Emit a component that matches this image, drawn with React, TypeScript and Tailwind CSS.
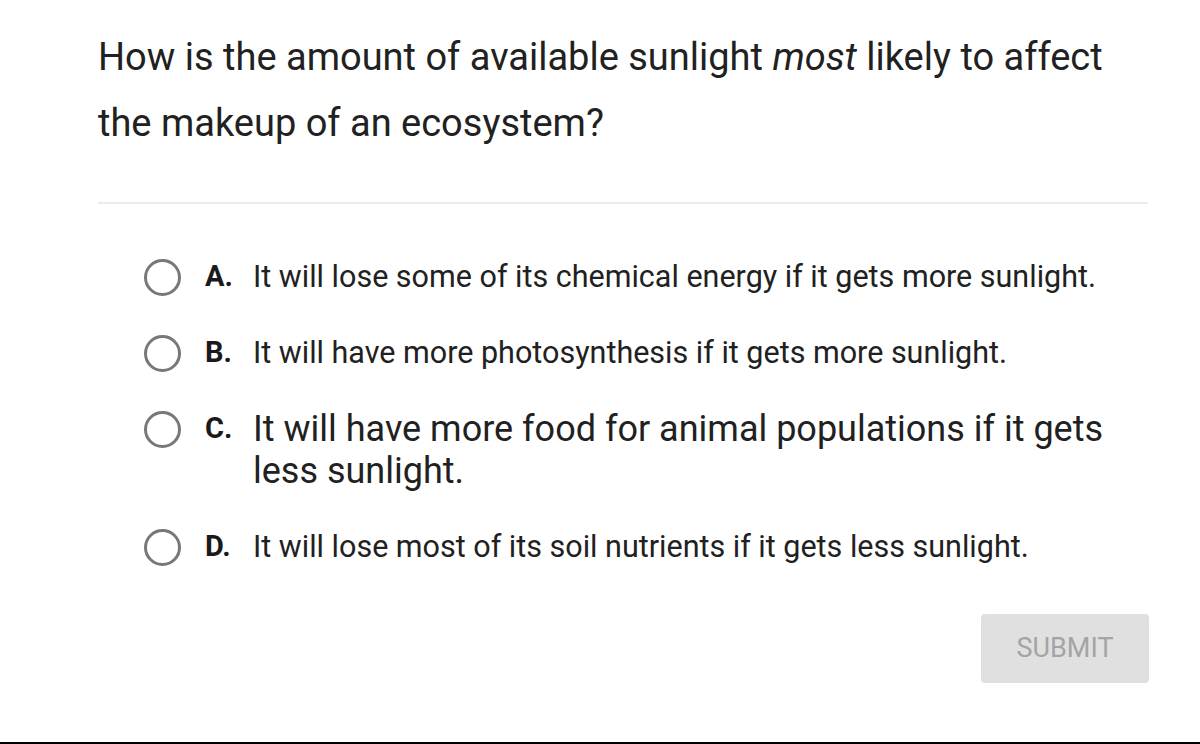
const options = [
  { label: 'A.', text: 'It will lose some of its chemical energy if it gets more sunlight.', big: false },
  { label: 'B.', text: 'It will have more photosynthesis if it gets more sunlight.', big: false },
  { label: 'C.', text: 'It will have more food for animal populations if it gets less sunlight.', big: true },
  { label: 'D.', text: 'It will lose most of its soil nutrients if it gets less sunlight.', big: false },
];

export default function App() {
  return (
    <div className="w-full h-[744px] flex flex-col bg-white font-['Roboto',sans-serif] text-[#212121]">
      <div className="flex-1 pl-[98px] pt-[24px]">
        {/* Question */}
        <h1 className="w-[1050px] text-[38px] leading-[66px] font-normal">
          How is the amount of available sunlight <em>most</em> likely to affect the makeup of an ecosystem?
        </h1>

        <div className="mt-[46px] h-[2px] w-[1050px] bg-[#ebebeb]" />

        {/* Answers */}
        <div className="mt-[52px] pl-[46px] w-[1050px] flex flex-col gap-[34px]">
          {options.map((o) => (
            <div key={o.label} className="flex items-start">
              <div className="h-[42px] flex items-center">
                <span className="block w-[37px] h-[37px] rounded-full border-[3px] border-[#787878]" />
              </div>
              <span className="ml-[24px] w-[48px] shrink-0 h-[42px] flex items-center text-[29px] font-bold text-[#1a1a1a]">
                {o.label}
              </span>
              <span className={o.big ? 'flex-1 text-[36px] leading-[42px]' : 'flex-1 text-[30.5px] leading-[42px]'}>
                {o.text}
              </span>
            </div>
          ))}
        </div>

        <div className="mt-[46px] w-[1051px] flex justify-end">
          <button className="w-[168px] h-[69px] rounded-[4px] bg-[#e0e0e0] text-[#a4a4a4] text-[27px]">
            SUBMIT
          </button>
        </div>
      </div>
      <div className="h-[2px] bg-black" />
    </div>
  );
}
